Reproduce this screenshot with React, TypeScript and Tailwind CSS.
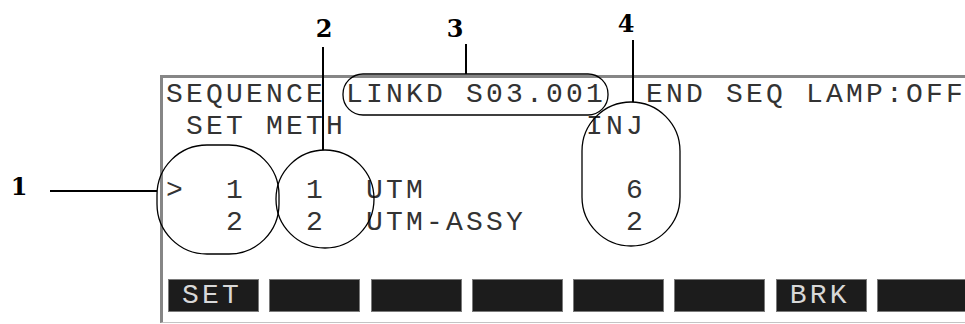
const rows = [
  "SEQUENCE LINKD S03.001  END SEQ LAMP:OFF",
  " SET METH            INJ",
  "",
  ">  1   1  UTM          6",
  "   2   2  UTM-ASSY     2",
];

const softKeys = ["SET", "", "", "", "", "", "BRK", ""];

const lcd = { fontFamily: '"Liberation Mono", "DejaVu Sans Mono", monospace' };

function Callouts() {
  const serif = '"DejaVu Serif", "Liberation Serif", serif';
  return (
    <svg
      className="absolute inset-0 pointer-events-none"
      width={965}
      height={324}
      viewBox="0 0 965 324"
    >
      <g fill="none" stroke="#000" strokeWidth={1.3}>
        <rect x={157} y={145} width={122} height={109} rx={50} ry={50} />
        <circle cx={325} cy={199} r={49} />
        <rect x={343} y={74} width={265} height={41} rx={20} ry={20} />
        <rect x={582} y={102} width={98} height={144} rx={49} ry={49} />
      </g>
      <g stroke="#000" strokeWidth={2}>
        <line x1={50} y1={191} x2={157} y2={191} />
        <line x1={323} y1={47} x2={323} y2={150} />
        <line x1={466} y1={44} x2={466} y2={74} />
        <line x1={633} y1={40} x2={633} y2={102} />
      </g>
      <g fontFamily={serif} fontWeight="bold" fontSize={24} textAnchor="middle" fill="#000">
        <text x={19} y={195}>1</text>
        <text x={324} y={37}>2</text>
        <text x={455} y={37}>3</text>
        <text x={626} y={32}>4</text>
      </g>
    </svg>
  );
}

export default function App() {
  return (
    <div className="relative w-[965px] h-[324px] bg-white overflow-hidden">
      <div className="ml-[160px] mt-[75px] h-[248px] border-l-[3px] border-t-[3px] border-b border-[#868686] border-b-[#c4c4c4] pl-[3px] pt-[1px]">
        <div style={lcd} className="text-[28px] leading-[32px] tracking-[3.2px] text-[#333] whitespace-pre">
          {rows.map((r, i) => (
            <div key={i} className="h-[32px]">{r}</div>
          ))}
        </div>
        <div className="mt-[40px] ml-[2px] flex gap-[10.3px]">
          {softKeys.map((k, i) => (
            <div
              key={i}
              style={lcd}
              className="w-[91px] h-[33px] shrink-0 bg-[#1c1c1c] border border-[#7a7a7a] pl-[13px] text-[28px] leading-[31px] tracking-[3.2px] text-[#d8d8d8] whitespace-pre"
            >
              {k}
            </div>
          ))}
        </div>
      </div>
      <Callouts />
    </div>
  );
}
